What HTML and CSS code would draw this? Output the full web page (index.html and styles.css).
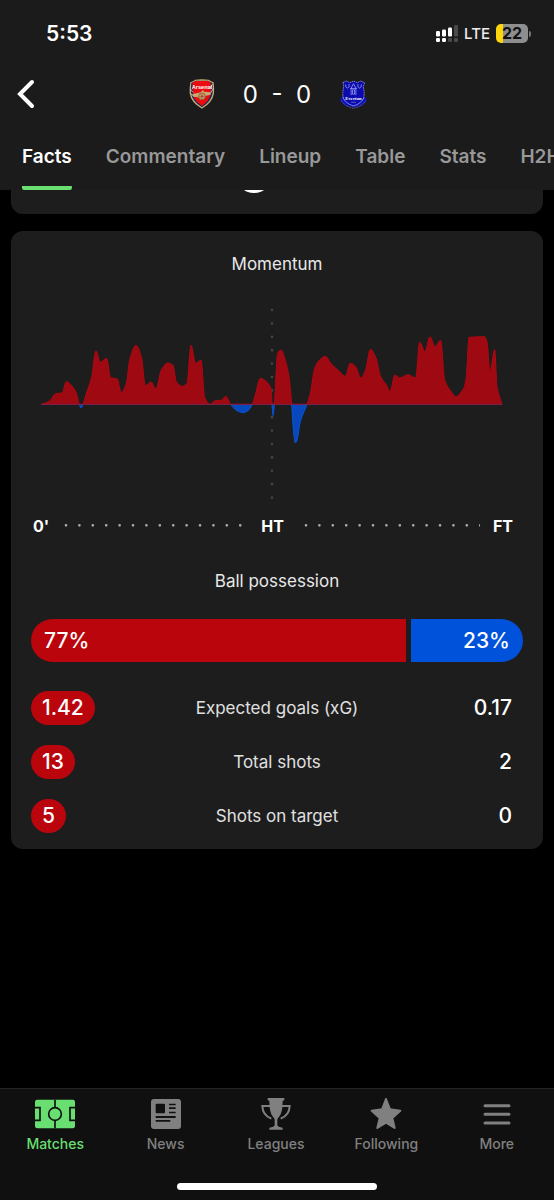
FILE: index.html
```html
<!DOCTYPE html>
<html lang="en">
<head>
<meta charset="utf-8">
<meta name="viewport" content="width=device-width, initial-scale=1">
<title>Arsenal 0 - 0 Everton</title>
<link rel="stylesheet" href="styles.css">
</head>
<body>
<header class="header">
  <div class="status">
    <time class="clock">5:53</time>
    <div class="status-right">
      <svg class="signal" viewBox="0 0 23 17" aria-hidden="true">
        <g fill="#fff"><rect x="0" y="6" width="4" height="5.500" rx="1.300"/><rect x="6" y="4.500" width="4" height="7" rx="1.300"/><rect x="12" y="2.500" width="4" height="9" rx="1.300"/><rect x="0" y="13" width="4" height="4" rx="1.300"/><rect x="6" y="13" width="4" height="4" rx="1.300"/></g>
        <g fill="#4a4a4a"><rect x="18" y="0" width="4" height="11.500" rx="1.300"/><rect x="12" y="13" width="4" height="4" rx="1.300"/><rect x="18" y="13" width="4" height="4" rx="1.300"/></g>
      </svg>
      <span class="network">LTE</span>
      <span class="battery"><span class="battery-body">22</span><span class="battery-tip"></span></span>
    </div>
  </div>
  <div class="scoreline">
    <button class="back" type="button" aria-label="Back">
      <svg viewBox="0 0 18 30" aria-hidden="true"><path d="M15 3 3 15l12 12" fill="none" stroke="#fff" stroke-width="4" stroke-linecap="round" stroke-linejoin="miter"/></svg>
    </button>
    <div class="score">
      <svg class="crest" viewBox="0 0 78 90" role="img" aria-label="Arsenal">
        <path d="M4 10Q12 7 19 2q20-2 40 0 7 5 15 8 2 17 1 33-4 28-36 46Q6 72 2 43 1 27 4 10z" fill="#c9ab72"/>
        <path d="M7 12Q14 9 21 5h36q6 4 14 7 2 16 0 31-4 24-32 42Q10 67 6 43 5 27 7 12z" fill="#172b58"/>
        <path d="M10 12 20 6h38l7 6q3 18 0 34-4 20-26 35Q16 67 12 46z" fill="#ed0b12"/>
        <path d="M4 30 12 40M5 43l10 10M71 14l-6 12M73 28 65 42" stroke="#eee" stroke-width="2"/>
        <path d="M10 45q15-2 25-5l7-7 3 5 20 2v7l-17 4-1 9-14 2-5-7-14-2z" fill="#c9ab72"/>
        <circle cx="39" cy="52" r="10" fill="#d4b578" stroke="#77512c" stroke-width="2"/>
        <path d="M29 52h20M39 42v20M32 45l14 14M46 45 32 59" stroke="#8c2725" stroke-width="1.500"/>
        <text x="39" y="29" text-anchor="middle" class="crest-arsenal">Arsenal</text>
      </svg>
      <strong class="result">0&nbsp; -&nbsp; 0</strong>
      <svg class="crest crest-wide" viewBox="0 0 86 86" role="img" aria-label="Everton">
        <path d="M12 7 22 3l10 5 11-5 11 5 10-5 12 5-4 12q4 16 2 30-5 19-31 28-26-9-31-28-2-14 2-30z" fill="#0b0bad" stroke="#aab2f5" stroke-width="2" stroke-dasharray="5 2"/>
        <path d="M2 55l9-5q7 19 32 26 25-7 32-26l9 6-5 3 2 8-9 1-2 8-9-1-7 7-9-5-4 5-7-5-8 3-5-7-8 1-1-8-8-1 2-7z" fill="#1010b8"/>
        <path d="M11 51q8 19 32 26 24-7 32-26" fill="none" stroke="#a9b2ff" stroke-width="2"/>
        <path d="M7 60q8 17 35 24 30-7 38-24" fill="none" stroke="#8089f0" stroke-width="2" stroke-dasharray="3 2"/>
        <path d="M36 45V24l7-13 7 13v21M33 25h20M40 29v13h6V29zM20 13v7q5 8 10 0v-8M56 12v8q5 8 10 0v-7" fill="none" stroke="#b0b8ff" stroke-width="2"/>
        <text x="43" y="60" text-anchor="middle" class="crest-everton">Everton</text>
        <path d="M36 66h14" stroke="#aeb7ff" stroke-width="2" stroke-dasharray="2 1"/>
      </svg>
    </div>
  </div>
  <nav class="tabs" aria-label="Match sections">
    <a class="tab tab-active" href="#facts" aria-current="page">Facts</a>
    <a class="tab" href="#commentary">Commentary</a>
    <a class="tab" href="#lineup">Lineup</a>
    <a class="tab" href="#table">Table</a>
    <a class="tab" href="#stats">Stats</a>
    <a class="tab" href="#h2h">H2H</a>
  </nav>
</header>

<main class="content" id="facts">
  <section class="card card-previous"><span class="badge"></span></section>
  <section class="card card-stats">
    <h2 class="title">Momentum</h2>
    <svg class="momentum" viewBox="34 51 1386 600" role="img" aria-label="Match momentum">
      <defs>
        <clipPath id="above"><rect x="0" y="0" width="1440" height="343"/></clipPath>
        <clipPath id="below"><rect x="0" y="343" width="1440" height="300"/></clipPath>
      </defs>
      <path d="M727 60V624" class="half-line"/>
      <path class="curve home" clip-path="url(#above)"/>
      <path class="curve away" clip-path="url(#below)"/>
      <path d="M35 343H1417" class="baseline"/>
    </svg>
    <div class="timeline">
      <span>0'</span>
      <svg class="dots" viewBox="0 0 558 12" preserveAspectRatio="xMinYMid slice" aria-hidden="true"><path d="M12 4H540"/></svg>
      <span>HT</span>
      <svg class="dots" viewBox="0 0 549 12" preserveAspectRatio="xMinYMid slice" aria-hidden="true"><path d="M27 4H560"/></svg>
      <span>FT</span>
    </div>
    <h2 class="title">Ball possession</h2>
    <div class="possession" style="grid-template-columns:77fr 23fr">
      <div class="share share-home">77%</div>
      <div class="share share-away">23%</div>
    </div>
    <dl class="stats">
      <div class="stat"><dd class="value"><span class="pill">1.42</span></dd><dt>Expected goals (xG)</dt><dd class="value value-away">0.17</dd></div>
      <div class="stat"><dd class="value"><span class="pill">13</span></dd><dt>Total shots</dt><dd class="value value-away">2</dd></div>
      <div class="stat"><dd class="value"><span class="pill">5</span></dd><dt>Shots on target</dt><dd class="value value-away">0</dd></div>
    </dl>
  </section>
</main>

<footer class="footer">
  <nav class="menu" aria-label="Main">
    <a class="item item-active" href="#matches">
      <svg viewBox="0 0 120 96" aria-hidden="true"><rect y="5" width="120" height="86" rx="7" fill="currentColor"/><g fill="none" stroke="#101010" stroke-width="5"><path d="M60 5v23M60 68v23M0 29h15v38H0M120 29h-15v38h15"/><circle cx="60" cy="48" r="19"/></g></svg>
      Matches</a>
    <a class="item" href="#news">
      <svg viewBox="0 0 120 96" aria-hidden="true"><rect x="15" y="3" width="90" height="90" rx="9" fill="currentColor"/><g fill="#101010"><rect x="29" y="17" width="28" height="29" rx="3"/><path d="M69 17h20v5H69zM69 28h20v5H69zM69 41h20v5H69zM29 54h60v6H29zM29 66h44v5H29z"/></g></svg>
      News</a>
    <a class="item" href="#leagues">
      <svg viewBox="0 0 120 96" aria-hidden="true"><path d="M35 0h50v6l-5 3q0 37-12 49-4 4-4 8v16q1 5 16 7v6H40v-6q15-2 16-7V66q0-4-4-8Q40 46 40 9l-5-3z" fill="currentColor"/><path d="M42 24H19q1 28 27 38M78 24h23q-1 28-27 38" fill="none" stroke="currentColor" stroke-width="6"/></svg>
      Leagues</a>
    <a class="item" href="#following">
      <svg viewBox="0 0 120 96" aria-hidden="true"><path d="M60 3 72 34l31 4-24 22 7 30-26-16-26 16 7-30-24-22 31-4z" fill="currentColor" stroke="currentColor" stroke-width="6" stroke-linejoin="round"/></svg>
      Following</a>
    <a class="item" href="#more">
      <svg viewBox="0 0 120 96" aria-hidden="true"><path d="M24 23h72M24 49h72M24 75h72" stroke="currentColor" stroke-width="9" stroke-linecap="round"/></svg>
      More</a>
  </nav>
  <div class="home-indicator"></div>
</footer>
<script src="chart.js"></script>
</body>
</html>
```

FILE: styles.css
```css
* { box-sizing: border-box; }
body {
  margin: 0;
  min-height: 100vh;
  display: flex;
  flex-direction: column;
  background: #000;
  color: #fff;
  font-family: Inter, "Liberation Sans", sans-serif;
  overflow-x: hidden;
}
a { color: inherit; text-decoration: none; }
svg { display: block; }

.header { background: #1b1b1b; overflow: hidden; }
.status {
  display: flex;
  align-items: center;
  justify-content: space-between;
  height: 67px;
  padding: 0 23px 0 46px;
}
.clock { font-size: 21px; font-weight: 600; }
.status-right { display: flex; align-items: center; gap: 6px; }
.signal { width: 23px; height: 17px; }
.network { font-size: 15px; font-weight: 500; color: #eee; margin-left: -1px; }
.battery { display: flex; align-items: center; gap: 1px; }
.battery-body {
  width: 32px;
  height: 19px;
  border-radius: 5px;
  background: linear-gradient(90deg, #ffd60a 7px, #8e8e8e 7px);
  color: #111;
  font-size: 16px;
  font-weight: 700;
  line-height: 19px;
  text-align: center;
}
.battery-tip { width: 2px; height: 6px; border-radius: 0 3px 3px 0; background: #777; }

.scoreline {
  display: grid;
  grid-template-columns: 51px 1fr 48px;
  align-items: center;
  height: 54px;
}
.back { padding: 0 0 0 17px; border: 0; background: none; }
.back svg { width: 18px; height: 30px; }
.score { display: flex; align-items: center; justify-content: center; gap: 28px; }
.crest { width: 26px; height: 30px; }
.crest-wide { width: 29px; height: 29px; }
.crest-arsenal { font: 700 17px "Liberation Sans", sans-serif; fill: #fff; }
.crest-everton { font: 700 14px "Liberation Serif", serif; fill: #fff; }
.result { font-size: 24px; font-weight: 400; line-height: 30px; padding-top: 2px; }

.tabs { display: flex; gap: 34px; height: 69px; padding: 0 22px; }
.tab {
  flex: none;
  padding-top: 24px;
  font-size: 19px;
  font-weight: 600;
  line-height: 24px;
  color: #989898;
  border-bottom: 4px solid transparent;
}
.tab-active {
  color: #fff;
  background: linear-gradient(#68df70, #68df70) bottom / 100% 4px no-repeat;
  background-origin: border-box;
  background-clip: border-box;
  border-radius: 2px;
}

.content { flex: 1; padding: 0 11px; }
.card { background: #1d1d1d; border-radius: 12px; }
.card-previous {
  position: relative;
  height: 24px;
  margin-bottom: 17px;
  border-radius: 0 0 12px 12px;
  overflow: hidden;
}
.badge {
  position: absolute;
  left: 225px;
  bottom: 21px;
  width: 36px;
  height: 36px;
  border-radius: 50%;
  background: #fff;
}
.card-stats { padding: 21px 20px 16px; }
.title {
  margin: 0;
  font-size: 17px;
  font-weight: 400;
  line-height: 24px;
  text-align: center;
  color: #e8e8e8;
}
.momentum { width: 100%; height: auto; padding: 0 20px 0 10px; margin-top: 31px; }
.curve { stroke-width: 3; }
.home { fill: #9e0912; stroke: #b10812; }
.away { fill: #0749bd; stroke: #0a55d8; }
.baseline { stroke: #8c1a35; stroke-width: 3; }
.half-line { stroke: #444; stroke-width: 8; stroke-linecap: round; stroke-dasharray: 0 40.2; }

.timeline {
  display: grid;
  grid-template-columns: auto 186fr auto 183fr auto;
  align-items: center;
  gap: 13px;
  padding: 0 10px 0 2px;
  margin-top: 9px;
  font-size: 16px;
  font-weight: 700;
  line-height: 20px;
}
.dots { width: 100%; height: 4px; fill: none; stroke: #aaa; stroke-width: 8; stroke-linecap: round; stroke-dasharray: 0 40.2; }
.timeline + .title { margin-top: 33px; }

.possession { display: grid; gap: 5px; margin-top: 26px; }
.share {
  height: 43px;
  padding: 0 13px;
  font-size: 21px;
  font-weight: 500;
  line-height: 43px;
}
.share-home { background: #bb050d; border-radius: 22px 0 0 22px; }
.share-away { background: #0052db; border-radius: 0 22px 22px 0; text-align: right; }

.stats { display: grid; gap: 20px; margin: 29px 0 0; }
.stat { display: grid; grid-template-columns: 1fr auto 1fr; align-items: center; }
.stat dt { font-size: 17px; color: #e0e0e0; }
.value { display: flex; margin: 0; font-size: 21px; font-weight: 500; line-height: 34px; }
.value-away { justify-content: flex-end; padding-right: 11px; }
.pill { padding: 0 11px; border-radius: 17px; background: #bb050d; }

.footer { background: #101010; border-top: 1px solid #242424; padding: 9px 0 10px; }
.menu { display: grid; grid-template-columns: repeat(5, 1fr); padding-right: 2px; }
.item {
  display: flex;
  flex-direction: column;
  align-items: center;
  gap: 4px;
  color: #808080;
  font-size: 14px;
  font-weight: 500;
  line-height: 20px;
}
.item svg { width: 40px; height: 32px; }
.item-active { color: #68df70; }
.home-indicator { width: 36%; height: 7px; margin: 29px auto 0; border-radius: 4px; background: #fff; }
```

FILE: chart.js
```js
// Momentum samples as [position, level]; levels above 343 belong to the away side.
const points = [
  [35,343],[60,333],[78,311],[97,309],[110,275],[127,288],[140,310],[149,343],[154,354],[160,343],
  [170,310],[185,265],[199,182],[212,217],[231,205],[243,264],[262,266],[275,307],[290,280],[300,210],
  [319,166],[336,205],[347,287],[364,276],[379,297],[395,240],[414,219],[430,226],[440,275],[458,289],
  [472,280],[484,166],[498,220],[514,210],[525,322],[541,343],[557,332],[575,331],[588,319],[603,343],
  [620,361],[640,368],[655,362],[668,343],[678,310],[692,265],[712,277],[725,300],[727,343],[730,377],
  [734,343],[744,190],[754,180],[768,215],[778,260],[786,343],[792,430],[797,459],[802,450],[812,395],
  [832,343],[842,310],[855,235],[870,210],[887,199],[905,222],[930,245],[947,259],[962,220],[978,230],
  [993,264],[1008,240],[1022,178],[1040,207],[1052,258],[1070,285],[1081,304],[1096,255],[1110,264],
  [1135,254],[1158,264],[1170,157],[1186,185],[1201,140],[1216,170],[1233,151],[1245,270],[1265,305],
  [1278,320],[1302,295],[1310,260],[1318,142],[1364,140],[1372,155],[1381,245],[1395,179],[1402,290],[1417,343]
];

// Monotone cubic interpolation keeps peaks at the sampled values.
function curve(p) {
  const slope = i => (p[i + 1][1] - p[i][1]) / (p[i + 1][0] - p[i][0]);
  const tangent = p.map((_, i) => {
    if (i === 0) return slope(0);
    if (i === p.length - 1) return slope(i - 1);
    const a = slope(i - 1), b = slope(i);
    return a * b <= 0 ? 0 : 2 * a * b / (a + b);
  });
  let d = "M" + p[0];
  for (let i = 1; i < p.length; i++) {
    const h = (p[i][0] - p[i - 1][0]) / 3;
    d += "C" + [p[i - 1][0] + h, p[i - 1][1] + h * tangent[i - 1],
      p[i][0] - h, p[i][1] - h * tangent[i], p[i][0], p[i][1]];
  }
  return d + "Z";
}

document.querySelectorAll(".curve").forEach(path => path.setAttribute("d", curve(points)));
```
